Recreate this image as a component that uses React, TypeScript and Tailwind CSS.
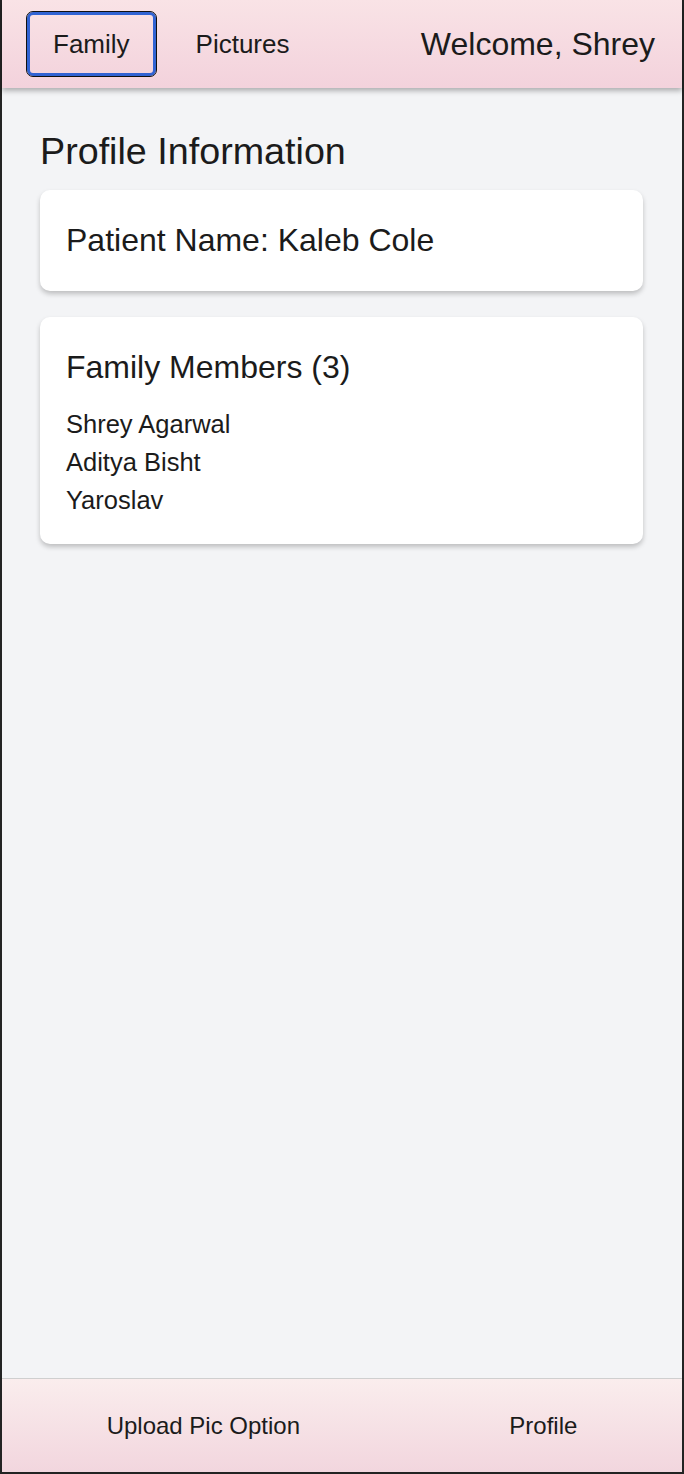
import { useState } from "react";

const familyMembers = ["Shrey Agarwal", "Aditya Bisht", "Yaroslav"];

export default function App() {
  const [tab, setTab] = useState<"family" | "pictures">("family");

  return (
    <div
      className="flex h-screen flex-col border-x-2 border-b-2 border-[#232323] bg-[#f3f4f6] text-[#1b1b1b]"
      style={{ fontFamily: '"Liberation Sans", Arial, sans-serif' }}
    >
      {/* Header */}
      <header className="relative z-10 flex h-[88px] shrink-0 items-center bg-gradient-to-b from-[#f9e3e6] to-[#f3d2dc] pl-[24px] pr-[27px] shadow-[0_3px_5px_rgba(0,0,0,0.28)]">
        <button
          onClick={() => setTab("family")}
          className={
            tab === "family"
              ? "h-[66px] rounded-[7px] border-[1.5px] border-[#111] px-[26px] text-[26px] leading-none shadow-[inset_0_0_0_3px_#3163d3]"
              : "h-[66px] rounded-[7px] border-[1.5px] border-transparent px-[26px] text-[26px] leading-none"
          }
        >
          Family
        </button>
        <button
          onClick={() => setTab("pictures")}
          className={
            tab === "pictures"
              ? "ml-[12px] h-[66px] rounded-[7px] border-[1.5px] border-[#111] px-[26px] text-[26px] leading-none shadow-[inset_0_0_0_3px_#3163d3]"
              : "ml-[12px] h-[66px] rounded-[7px] border-[1.5px] border-transparent px-[26px] text-[26px] leading-none"
          }
        >
          Pictures
        </button>
        <div className="ml-auto text-[32px] leading-none">Welcome, Shrey</div>
      </header>

      {/* Content */}
      <main className="flex-1 pl-[38px] pr-[39px] pt-[41px]">
        <h1 className="text-[37.7px] leading-[44px]">Profile Information</h1>

        <div className="mt-[17px] rounded-[10px] bg-white px-[26px] py-[32px] shadow-[0_3px_5px_rgba(0,0,0,0.22)]">
          <div className="text-[32px] leading-[37px]">Patient Name: Kaleb Cole</div>
        </div>

        <div className="mt-[26px] rounded-[10px] bg-white px-[26px] pb-[25px] pt-[32px] shadow-[0_3px_5px_rgba(0,0,0,0.22)]">
          <div className="text-[32px] leading-[37px]">Family Members ({familyMembers.length})</div>
          <ul className="mt-[19px]">
            {familyMembers.map((name) => (
              <li key={name} className="text-[25.5px] leading-[38px]">
                {name}
              </li>
            ))}
          </ul>
        </div>
      </main>

      {/* Footer */}
      <footer className="flex h-[94px] shrink-0 items-center justify-around border-t border-[#cfcfcf] bg-gradient-to-b from-[#faeded] to-[#f2d6de]">
        <button className="text-[24px] leading-none">Upload Pic Option</button>
        <button className="text-[24px] leading-none">Profile</button>
      </footer>
    </div>
  );
}
